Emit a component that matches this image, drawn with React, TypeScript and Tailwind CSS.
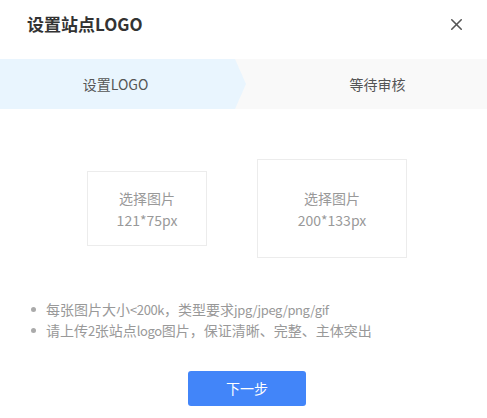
import { X } from "lucide-react";

const font = { fontFamily: '"Noto Sans CJK SC", "Noto Sans", sans-serif' };

function PickBox({ w, h, size }: { w: string; h: string; size: string }) {
  return (
    <div className={`${w} ${h} border border-[#ececec] flex flex-col items-center justify-center text-[14px] leading-[22px] text-[#999]`}>
      <span>选择图片</span>
      <span>{size}</span>
    </div>
  );
}

function Lat({ children }: { children: string }) {
  return <span className="text-[13px] tracking-[-0.4px]">{children}</span>;
}

export default function App() {
  return (
    <div className="w-[487px] h-[418px] bg-white overflow-hidden" style={font}>
      <div className="flex items-center justify-between pl-[27px] pr-[21px] pt-[8px] h-[40px]">
        <h1 className="text-[17px] font-bold text-[#333]">设置站点LOGO</h1>
        <X className="w-[19px] h-[19px] text-[#555]" strokeWidth={2} />
      </div>

      <div className="mt-[19px] h-[50px] flex bg-[#f9f9f9] text-[14px] text-[#555]">
        <div className="w-[246px] flex items-center bg-[#e9f5fe] [clip-path:polygon(0_0,235px_0,246px_50%,235px_100%,0_100%)]">
          <span className="w-[231px] text-center">设置LOGO</span>
        </div>
        <div className="flex-1 flex items-center justify-center pl-[22px]">等待审核</div>
      </div>

      <div className="mt-[50px] flex items-center gap-[50px] pl-[87px]">
        <PickBox w="w-[120px]" h="h-[75px]" size="121*75px" />
        <PickBox w="w-[150px]" h="h-[99px]" size="200*133px" />
      </div>

      <ul className="mt-[41px] pl-[31px] text-[14px] leading-[20px] text-[#999]">
        <li className="flex items-center gap-[10px]">
          <span className="w-[5px] h-[5px] rounded-full bg-[#aaa]" />
          <span>
            每张图片大小<Lat>&lt;200k</Lat>，类型要求<Lat>jpg/jpeg/png/gif</Lat>
          </span>
        </li>
        <li className="flex items-center gap-[10px]">
          <span className="w-[5px] h-[5px] rounded-full bg-[#aaa]" />
          <span>
            请上传<Lat>2</Lat>张站点<Lat>logo</Lat>图片，保证清晰、完整、主体突出
          </span>
        </li>
      </ul>

      <div className="mt-[30px] pl-[188px]">
        <button className="w-[118px] h-[35px] rounded-[3px] bg-[#4285f9] text-white text-[14px]">下一步</button>
      </div>
    </div>
  );
}
